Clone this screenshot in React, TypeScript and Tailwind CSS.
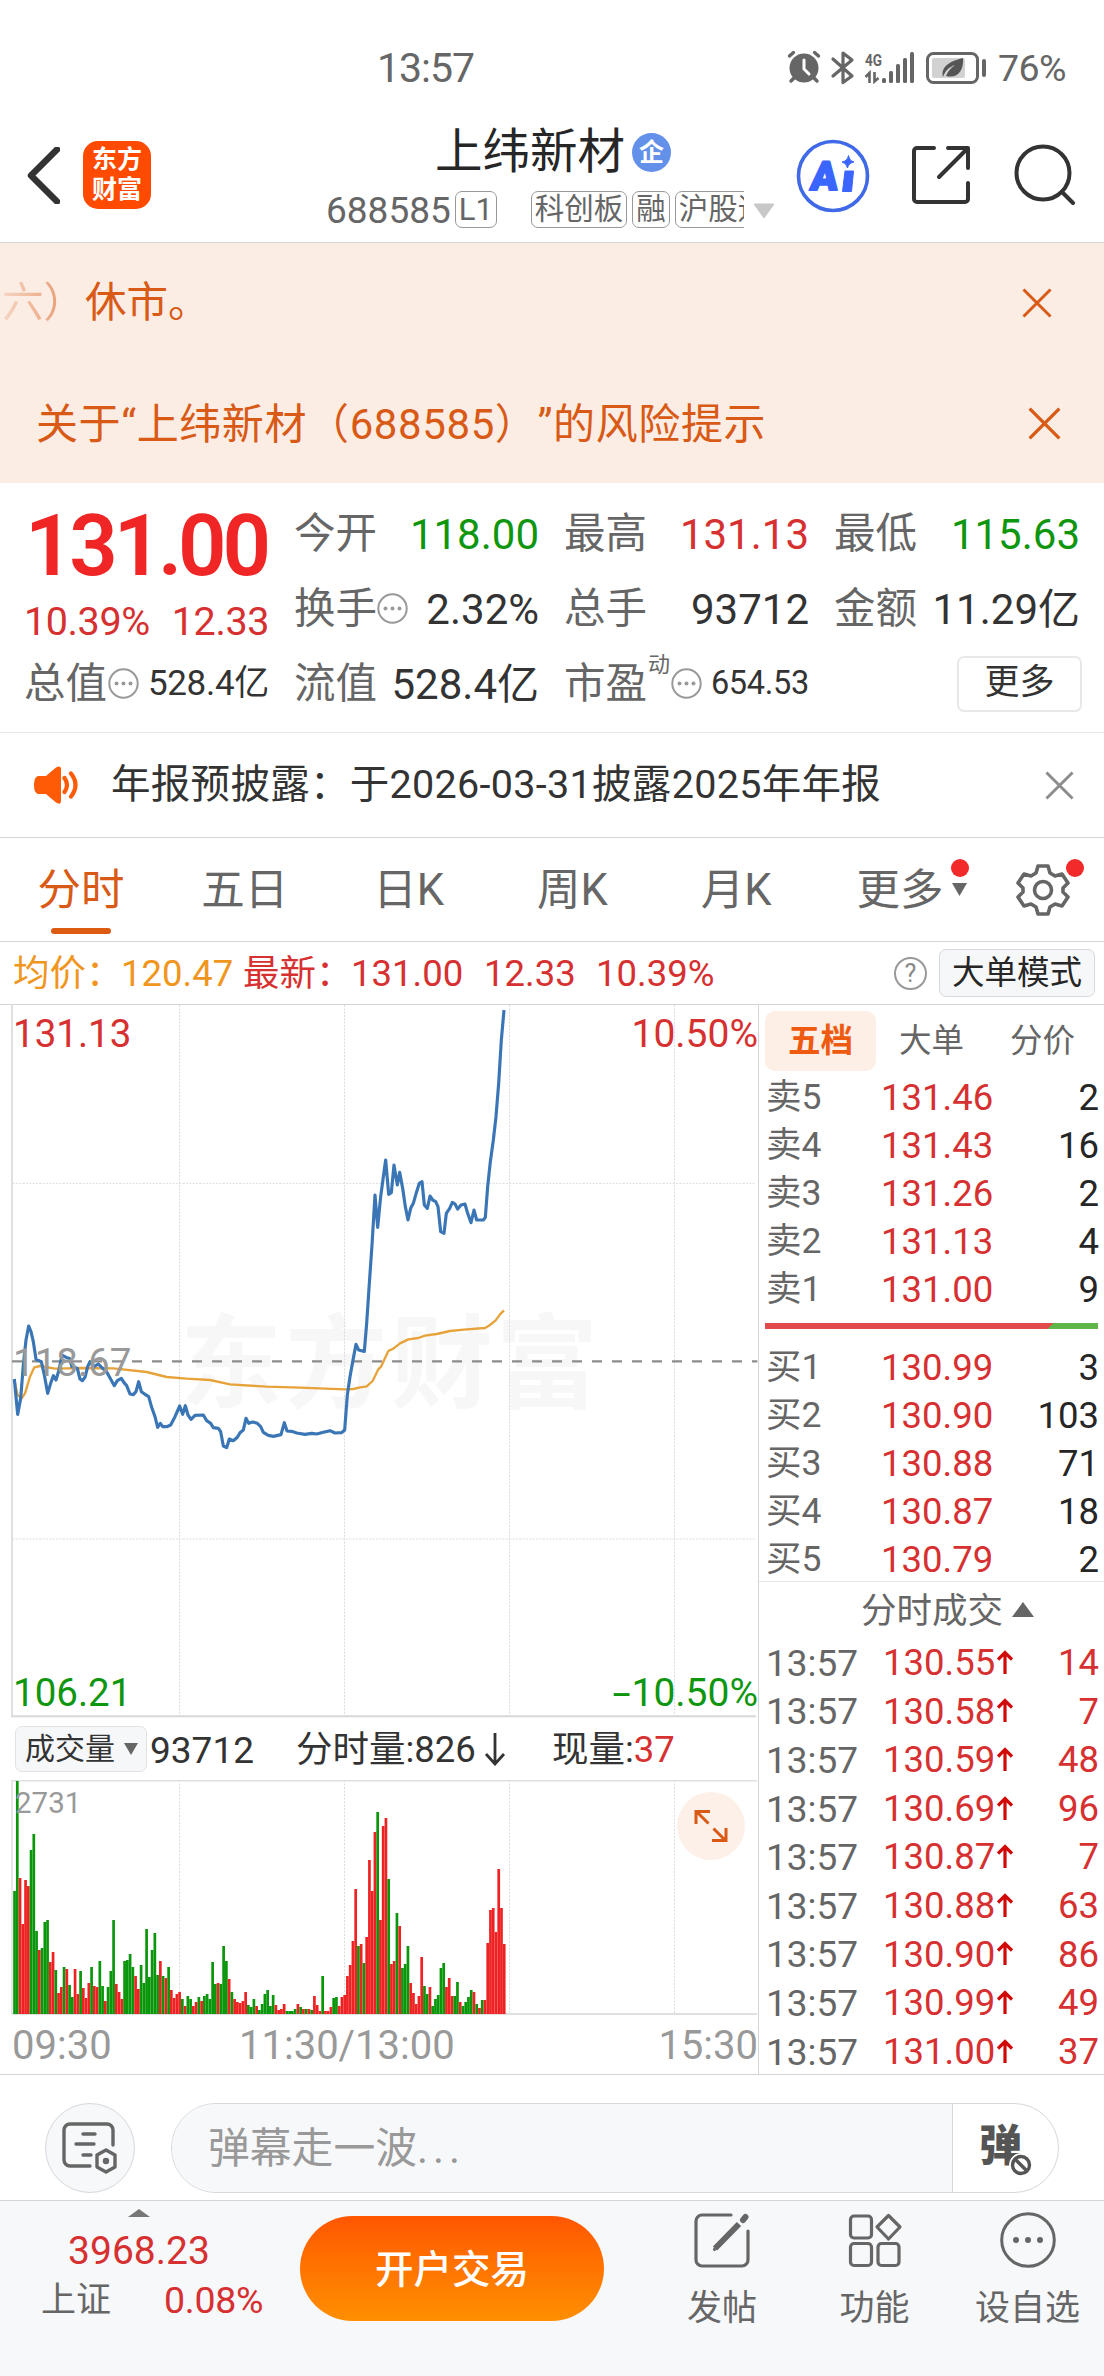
import React from 'react';

const sellOrders = [
    { label: '卖5', price: '131.46', qty: 2 },
    { label: '卖4', price: '131.43', qty: 16 },
    { label: '卖3', price: '131.26', qty: 2 },
    { label: '卖2', price: '131.13', qty: 4 },
    { label: '卖1', price: '131.00', qty: 9 },
];

const buyOrders = [
    { label: '买1', price: '130.99', qty: 3 },
    { label: '买2', price: '130.90', qty: 103 },
    { label: '买3', price: '130.88', qty: 71 },
    { label: '买4', price: '130.87', qty: 18 },
    { label: '买5', price: '130.79', qty: 2 },
];

const trades = [
    { price: '130.55', qty: 14 },
    { price: '130.58', qty: 7 },
    { price: '130.59', qty: 48 },
    { price: '130.69', qty: 96 },
    { price: '130.87', qty: 7 },
    { price: '130.88', qty: 63 },
    { price: '130.90', qty: 86 },
    { price: '130.99', qty: 49 },
    { price: '131.00', qty: 37 },
];

// chart units are thirds of a pixel
const pricePoints =
    '43,1137 53,1243 62,1195 70,1095 78,1020 86,978 93,995 100,1025 108,1078 124,1085 132,1120 143,1180 152,1150 160,1127 168,1140 177,1110 186,1065 200,1073 208,1075 216,1100 232,1105 240,1137 247,1142 255,1132 263,1100 270,1085 282,1100 295,1092 308,1105 318,1112 328,1130 343,1157 352,1142 364,1135 372,1148 380,1157 390,1182 400,1184 408,1175 416,1145 424,1175 435,1183 446,1190 455,1222 465,1250 473,1282 481,1270 488,1280 500,1280 512,1275 525,1250 539,1218 548,1243 556,1217 564,1245 573,1258 585,1246 610,1245 620,1262 632,1270 640,1283 655,1285 662,1295 670,1338 680,1343 688,1317 700,1322 712,1312 720,1298 730,1290 738,1255 746,1270 758,1266 772,1270 782,1280 790,1297 805,1306 820,1309 843,1304 853,1268 861,1293 875,1294 890,1299 915,1303 935,1300 950,1302 970,1297 990,1292 1005,1299 1025,1298 1034,1290 1042,1185 1050,1130 1060,1075 1068,1033 1076,1050 1084,1052 1093,1054 1100,970 1108,850 1116,735 1125,585 1133,682 1142,590 1150,530 1157,480 1166,583 1174,578 1182,495 1192,555 1199,517 1208,565 1216,620 1224,660 1232,625 1240,610 1250,575 1258,550 1266,545 1273,615 1282,625 1290,588 1298,600 1307,605 1314,620 1322,695 1332,700 1339,640 1349,625 1357,607 1365,612 1373,627 1383,615 1395,612 1403,640 1413,668 1422,630 1430,660 1450,660 1456,652 1463,560 1471,485 1480,420 1488,350 1496,250 1504,120 1512,30';

const avgPoints =
    '43,1140 53,1185 65,1195 75,1180 90,1130 103,1102 120,1098 165,1106 200,1105 250,1104 340,1105 440,1116 500,1131 560,1136 630,1140 690,1153 800,1160 900,1163 1035,1168 1060,1167 1080,1162 1100,1159 1118,1143 1135,1108 1143,1100 1165,1053 1180,1046 1200,1030 1225,1018 1255,1014 1275,1007 1310,1002 1350,993 1400,988 1455,984 1470,975 1487,961 1500,943 1512,931';

// one entry per minute: g = down, r = up, then bar height
const volumes =
    'g123 g233 r136 r90 r134 r128 g164 g180 g83 r64 g66 g92 g94 r52 r62 g44 r21 r27 g47 r45 g29 g17 r45 r20 g43 r26 r16 r31 g47 r28 r27 g53 g28 r13 g27 g43 g94 r30 r22 r15 g53 g54 g60 g47 r38 r25 g49 g31 g85 g37 g64 g81 g39 r53 g38 r36 g47 r24 r16 r20 r22 g15 r8 g18 g15 r8 r12 g17 r13 g18 g20 g15 g52 g30 r31 g30 g68 g53 r35 g22 r15 r12 r11 r13 r22 g9 g7 g15 r8 g4 g10 g20 g24 g8 g19 r9 r4 r5 r10 g3 g3 g3 g5 r10 g7 r5 g5 r5 g4 r18 r9 r3 g38 r3 r3 r7 g16 g17 r8 r17 r19 r38 r49 r73 r125 g68 r70 g51 r77 r154 r123 r182 g202 r94 r188 r196 g135 r50 r53 g101 r88 g46 g50 g68 r31 r21 r10 r18 r57 g28 g20 r27 g8 g15 g19 g46 g51 r27 r36 r18 g18 g32 r12 g8 g12 g17 g24 r22 g10 r6 g14 r14 r71 r104 r106 r82 r145 r106 r70'.split(' ');

const gridX = [179.5, 344.5, 509.5, 674.5];

const Close = ({ size, color, width = 3 }: { size: number; color: string; width?: number }) => (
    <svg width={size} height={size} viewBox="0 0 30 30" fill="none" stroke={color} strokeWidth={width}>
        <path d="M1.5 1.5 28.5 28.5M28.5 1.5 1.5 28.5" />
    </svg>
);

const Dots = () => (
    <svg className="shrink-0" width="31" height="31" viewBox="0 0 31 31">
        <circle cx="15.5" cy="15.5" r="14.2" fill="none" stroke="#999" strokeWidth="2" />
        <circle cx="8.5" cy="15.5" r="2" fill="#999" />
        <circle cx="15.5" cy="15.5" r="2" fill="#999" />
        <circle cx="22.5" cy="15.5" r="2" fill="#999" />
    </svg>
);

const StatusBar = () => (
    <div className="flex h-[86px] items-end text-[#666]">
        <div className="ml-[377px] h-[37px] text-[41px] leading-[38px] tracking-[-1px]">13:57</div>
        <svg className="mb-[-2px] ml-auto" width="202" height="44" viewBox="0 0 202 44">
            {/* alarm */}
            <g stroke="#666" fill="none" strokeLinecap="round" strokeWidth="3.4">
                <circle cx="17" cy="24" r="14.5" fill="#666" stroke="none" />
                <path d="M2.5 12 6.5 8.5M31.5 12 27.5 8.5" />
                <path d="M7 34 4 37M27 34 30 37" />
                <path d="M17 16v9l5 5" stroke="#fff" strokeWidth="3" />
            </g>
            {/* bluetooth */}
            <path d="M46 15 65 32 56 38.5V9l9 7L46 32" fill="none" stroke="#666" strokeWidth="3.2" strokeLinejoin="round" strokeLinecap="round" />
            <text x="78" y="21.5" fontSize="17" fontWeight="700" fill="#666" textLength="17" lengthAdjust="spacingAndGlyphs">4G</text>
            <path d="M78.5 33 82.5 29v10M91.5 34 87.5 37.5V28" fill="none" stroke="#666" strokeWidth="2.6" />
            <g fill="#666">
                <rect x="95" y="34" width="4" height="5" rx="1.5" />
                <rect x="102" y="27" width="4" height="12" rx="1.5" />
                <rect x="109" y="20" width="4" height="19" rx="1.5" />
                <rect x="116" y="14" width="4" height="25" rx="1.5" />
                <rect x="123" y="8" width="4" height="31" rx="1.5" />
            </g>
            {/* battery */}
            <rect x="140.5" y="9.5" width="50" height="29" rx="6" fill="none" stroke="#666" strokeWidth="3" />
            <rect x="145" y="14" width="33" height="20" rx="2" fill="#d2d2d2" />
            <path d="M156 33c-2-8 3-15 20-19 1 12-5 21-17 18 2-5 5-8 9-11-6 2-10 6-12 12z" fill="#555" />
            <rect x="195" y="15" width="4" height="18" rx="2" fill="#666" />
        </svg>
        <div className="mr-[38px] ml-[9px] h-[37px] text-[37.5px] leading-[38px] tracking-[-0.5px]">76%</div>
    </div>
);

const Tag = ({ children }: { children: React.ReactNode }) => (
    <span className="flex h-[37px] shrink-0 items-center rounded-[7px] border-[1.5px] border-[#999] px-[3px] text-[29.5px] leading-none whitespace-nowrap">
        {children}
    </span>
);

const Header = () => (
    <div className="flex h-[157px] border-b border-[#d5d5d5] text-[#2b2b2b]">
        <svg className="mt-[61px] ml-[26px] shrink-0" width="34" height="57" viewBox="0 0 34 57" fill="none" stroke="#333" strokeWidth="6.5">
            <path d="M31 2.5 5 28.5 31 54.5" strokeLinecap="round" strokeLinejoin="round" />
        </svg>
        <div className="mt-[55px] ml-[23px] flex h-[68px] w-[68px] shrink-0 flex-col items-center justify-center rounded-[15px] bg-[#ff4a00] text-[25px] leading-[30px] font-bold text-white">
            <span>东方</span>
            <span>财富</span>
        </div>
        <div className="ml-[173px] w-[452px] shrink-0 pt-[41px]">
            <div className="flex h-[52px] items-center pl-[111px]">
                <span className="text-[47.5px] leading-none text-[#262626]">上纬新材</span>
                <span className="-mt-[2px] ml-[7px] flex h-[39px] w-[39px] items-center justify-center rounded-full bg-[#6391ea] text-[25px] leading-none font-bold text-white">
                    企
                </span>
            </div>
            <div className="mt-[12px] flex h-[37px] items-center pl-[2px] text-[#666]">
                <span className="pt-px text-[37px] leading-none">688585</span>
                <span className="ml-[4px] flex h-[37px] w-[42px] items-center justify-center rounded-[7px] border-[1.5px] border-[#999] text-[31px] leading-none">
                    L1
                </span>
                <div className="ml-[34px] flex w-[213px] gap-[5px] overflow-hidden">
                    <Tag>科创板</Tag>
                    <Tag>融</Tag>
                    <Tag>沪股通</Tag>
                </div>
                <svg className="mt-[2px] ml-[9px] shrink-0" width="22" height="16" viewBox="0 0 22 16">
                    <path d="M1 1h20L11 15z" fill="#c8c8c8" stroke="#c8c8c8" strokeLinejoin="round" />
                </svg>
            </div>
        </div>
        <svg className="mt-[53px] ml-[20px] shrink-0" width="74" height="74" viewBox="0 0 74 74">
            <circle cx="37" cy="37" r="34.5" fill="none" stroke="#4069e8" strokeWidth="3.6" />
            <text transform="translate(13.5 50.5) skewX(-6)" fontSize="40" fontWeight="900" fill="#3a66ff" stroke="#3a66ff" strokeWidth="2" strokeLinejoin="round">A</text>
            <path d="M49 32h8.5l-2 20.5h-9z" fill="#3a66ff" stroke="#3a66ff" strokeLinejoin="round" />
            <path d="M52.5 16.5q1 5.5 5.5 6.5-5.5 1-6.5 6-1-5-5.5-6 5.5-1 6.5-6.5z" fill="#3a66ff" stroke="#3a66ff" />
        </svg>
        <svg className="mt-[59px] ml-[41px] shrink-0" width="60" height="60" viewBox="0 0 60 60" fill="none" stroke="#333" strokeWidth="4" strokeLinecap="round" strokeLinejoin="round">
            <path d="M23 3H6a3 3 0 0 0-3 3v48a3 3 0 0 0 3 3h48a3 3 0 0 0 3-3V38M37 3h20v20M56 4 28 32" />
        </svg>
        <svg className="mt-[57px] ml-[43px] shrink-0" width="62" height="62" viewBox="0 0 62 62" fill="none" stroke="#333" strokeWidth="4" strokeLinecap="round">
            <circle cx="29" cy="30" r="26.5" />
            <path d="M48 49 59 60" />
        </svg>
    </div>
);

const Banners = () => (
    <div className="h-[240px] bg-[#fcede4] text-[#d85a16] [text-spacing-trim:space-all]">
        <div className="flex h-[120px] items-center justify-between pr-[52px] pl-[2px]">
            <div className="text-[41.5px] leading-none">
                <span className="bg-linear-to-r from-[#d85a16]/15 to-[#d85a16]/70 bg-clip-text text-transparent">六）</span>
                <span>休市。</span>
            </div>
            <Close size={30} color="#d85a16" />
        </div>
        <div className="flex h-[120px] items-center justify-between pr-[43px] pl-[36px]">
            <div className="pt-[3px] text-[42px] leading-none tracking-[0.6px]">关于“上纬新材（688585）”的风险提示</div>
            <Close size={33} color="#d85a16" />
        </div>
    </div>
);

interface CellProps {
    label: string;
    value: string;
    tone?: string;
    dots?: boolean;
}

const Cell = ({ label, value, tone = 'text-[#333]', dots }: CellProps) => (
    <div className="flex h-[75px] items-center justify-between leading-none whitespace-nowrap">
        <span className="flex items-center text-[41.5px] text-[#666]">
            {label}
            {dots && <Dots />}
        </span>
        <span className={`pt-[2px] text-[42px] ${tone}`}>{value}</span>
    </div>
);

const Quote = () => (
    <div className="h-[250px] border-b border-[#e8e8e8] pt-[13px] pr-[24px] pl-[24px]">
        <div className="grid grid-cols-[245px_245px_245px_246px] gap-x-[25px]">
            <div className="row-span-2 h-[150px] leading-none">
                <div className="flex h-[98px] items-center pt-[3px] pl-px text-[85px] font-semibold tracking-[-4.2px] text-[#f02525]">131.00</div>
                <div className="flex h-[52px] items-center justify-between pt-[3px] text-[39.5px] tracking-[-0.4px] text-[#d63031]">
                    <span>10.39%</span>
                    <span>12.33</span>
                </div>
            </div>
            <Cell label="今开" value="118.00" tone="text-[#0f960f]" />
            <Cell label="最高" value="131.13" tone="text-[#d63031]" />
            <Cell label="最低" value="115.63" tone="text-[#0f960f]" />
            <Cell label="换手" value="2.32%" dots />
            <Cell label="总手" value="93712" />
            <Cell label="金额" value="11.29亿" />
            <div className="flex h-[75px] items-center leading-none whitespace-nowrap">
                <span className="mr-px text-[41.5px] text-[#666]">总值</span>
                <Dots />
                <span className="ml-auto text-[35px] tracking-[-0.3px] text-[#333]">528.4亿</span>
            </div>
            <Cell label="流值" value="528.4亿" />
            <div className="flex h-[75px] items-center leading-none">
                <span className="text-[41.5px] text-[#666]">市盈</span>
                <span className="-mt-[38px] ml-[1px] text-[22px] text-[#666]">动</span>
                <span className="ml-[1px]">
                    <Dots />
                </span>
                <span className="ml-auto text-[32.5px] tracking-[-0.3px] text-[#333]">654.53</span>
            </div>
            <div className="flex h-[75px] items-center justify-end">
                <div className="-mr-[2px] flex h-[56px] w-[125px] items-center justify-center rounded-[7px] border-2 border-[#e8e8e8] pb-[2px] text-[35px] leading-none text-[#333]">
                    更多
                </div>
            </div>
        </div>
    </div>
);

const Notice = () => (
    <div className="flex h-[105px] items-center border-b border-[#d5d5d5] pr-[30px] pl-[34px]">
        <svg width="46" height="38" viewBox="0 0 46 38">
            <path d="M4 10h8L22 1.5q5-3 5 2v31q0 5-5 2L12 28H4q-4-1-4-9t4-9z" fill="#ff5a05" />
            <path d="M30.5 12q5 7 0 14M37 7.5q9 11.5 0 23" fill="none" stroke="#ff5a05" strokeWidth="4.2" strokeLinecap="round" />
        </svg>
        <span className="ml-[31px] text-[39.5px] leading-none tracking-[0.3px] text-[#333]">年报预披露：于2026-03-31披露2025年年报</span>
        <span className="ml-auto">
            <Close size={29} color="#8c8c8c" />
        </span>
    </div>
);

const Tabs = () => (
    <div className="flex h-[104px] border-b border-[#d5d5d5] text-[43.5px] leading-none text-[#666]">
        <div className="-ml-px grid w-[983px] shrink-0 grid-cols-6">
            {['分时', '五日', '日K', '周K', '月K', '更多'].map((t, i) => (
                <div key={t} className={`relative flex h-[104px] items-center justify-center pt-[2px] ${i === 0 ? 'text-[#d85a16]' : ''}`}>
                    {t}
                    {i === 0 && <span className="absolute bottom-[8px] h-[6px] w-[60px] rounded-full bg-[#dd5a12]" />}
                    {i === 5 && (
                        <>
                            <span className="absolute top-[21px] right-[13px] h-[18px] w-[18px] rounded-full bg-[#f22a2a]" />
                            <svg className="absolute top-[45px] right-[15px]" width="15" height="13" viewBox="0 0 15 13">
                                <path d="M0 0h15L7.5 13z" fill="#666" />
                            </svg>
                        </>
                    )}
                </div>
            ))}
        </div>
        <div className="relative ml-[34px] flex items-center">
            <svg width="54" height="54" viewBox="0 0 54 54" fill="none" stroke="#666" strokeWidth="3.6" strokeLinejoin="round">
                <path d="M22 3h10l2 7 5 3 7-2 6 9-5 5v4l5 5-6 9-7-2-5 3-2 7H22l-2-7-5-3-7 2-6-9 5-5v-4l-5-5 6-9 7 2 5-3z" />
                <circle cx="27" cy="27" r="8.5" />
            </svg>
            <span className="absolute top-[21px] -right-[14px] h-[18px] w-[18px] rounded-full bg-[#f22a2a]" />
        </div>
    </div>
);

const PriceLine = () => (
    <div className="flex h-[63px] items-center border-b border-[#d5d5d5] pr-[9px] pl-[13px] text-[36.5px] leading-none whitespace-nowrap text-[#d63031]">
        <span className="w-[108px] pt-[2px] text-[#f0961e]">均价：</span>
        <span className="w-[122px] pt-[2px] text-[#f0961e]">120.47</span>
        <span className="w-[108px] pt-[2px]">最新：</span>
        <span className="w-[133px] pt-[2px]">131.00</span>
        <span className="w-[112px] pt-[2px]">12.33</span>
        <span className="pt-[2px]">10.39%</span>
        <span className="ml-auto flex h-[33px] w-[33px] items-center justify-center rounded-full border-[2.5px] border-[#999] text-[25px] text-[#888]">?</span>
        <span className="ml-[12px] flex h-[48px] w-[156px] items-center justify-center rounded-[7px] border-[1.5px] border-[#d6d9dd] bg-[#f6f7f9] pt-px text-[32.5px] text-[#262626]">
            大单模式
        </span>
    </div>
);

const PriceChart = () => (
    <div className="relative h-[713px] text-[38.5px] leading-none">
        <svg className="block" width="758" height="713" viewBox="0 15 2274 2139">
            <text x="540" y="1201" fontSize="306" fontWeight="700" letterSpacing="10" fill="#f7f7f7">东方财富</text>
            <g stroke="#dcdcdc" strokeWidth="3" strokeDasharray="6 4">
                {gridX.map((x) => (
                    <line key={x} x1={x * 3} x2={x * 3} y1="15" y2="2148" />
                ))}
                <line x1="38" x2="2268" y1="550" y2="550" />
                <line x1="38" x2="2268" y1="1617" y2="1617" />
            </g>
            <line x1="36" x2="36" y1="15" y2="2148" stroke="#e0e0e0" strokeWidth="6" />
            <line x1="33" x2="2268" y1="2149" y2="2149" stroke="#d8d8d8" strokeWidth="6" />
            <line x1="36" x2="2272" y1="1084" y2="1084" stroke="#8c8c8c" strokeWidth="7" strokeDasharray="30 30" />
            <polyline points={avgPoints} fill="none" stroke="#e8a23a" strokeWidth="7" strokeLinejoin="round" />
            <polyline points={pricePoints} fill="none" stroke="#3a76b6" strokeWidth="9.5" strokeLinejoin="round" />
        </svg>
        <span className="absolute top-[10px] left-[13px] text-[#d63031]">131.13</span>
        <span className="absolute top-[10px] right-0 text-[39px] text-[#d63031]">10.50%</span>
        <span className="absolute top-[339px] left-[13px] text-[#999]">118.67</span>
        <span className="absolute bottom-[6px] left-[13px] text-[#0f960f]">106.21</span>
        <span className="absolute right-0 bottom-[5px] text-[39px] text-[#0f960f]">
            <span className="mr-px inline-block origin-right scale-x-[1.7]">-</span>10.50%
        </span>
    </div>
);

const VolumeChart = () => (
    <div>
        <div className="flex h-[62px] items-center pl-[15px] text-[36.5px] leading-none whitespace-nowrap text-[#333]">
            <span className="flex h-[46px] w-[132px] items-center rounded-[7px] border-[1.5px] border-[#e0e2e5] bg-[#f6f7f9] pl-[9px] text-[30px]">
                成交量
                <svg className="ml-[9px]" width="14" height="12" viewBox="0 0 14 12">
                    <path d="M0 0h14L7 12z" fill="#666" />
                </svg>
            </span>
            <span className="ml-[3px] w-[146px] pt-[2px] text-[37px]">93712</span>
            <span className="pt-[2px]">分时量:826</span>
            <svg className="ml-[8px]" width="22" height="34" viewBox="0 0 22 34" fill="none" stroke="#333" strokeWidth="2.8">
                <path d="M11 1v30M2 22l9 10 9-10" />
            </svg>
            <span className="ml-[46px] pt-[2px]">
                现量:<span className="text-[#d63031]">37</span>
            </span>
        </div>
        <div className="relative h-[235px]">
            <svg className="block" width="758" height="235" viewBox="0 0 758 235">
                <line x1="12" x2="757" y1=".75" y2=".75" stroke="#e0e0e0" strokeWidth="1.5" />
                <line x1="12" x2="12" y1="0" y2="234" stroke="#e0e0e0" strokeWidth="1.5" />
                {gridX.map((x) => (
                    <line key={x} x1={x} x2={x} y1="0" y2="234" stroke="#dcdcdc" strokeDasharray="2 1.5" />
                ))}
                <line x1="12" x2="757" y1="234" y2="234" stroke="#e0e0e0" strokeWidth="2" />
                {volumes.map((v, i) => {
                    const h = Number(v.slice(1));
                    return <rect key={i} x={13.2 + i * 2.751} y={234 - h} width="2.7" height={h} fill={v[0] === 'g' ? '#0a960a' : '#ee2222'} />;
                })}
            </svg>
            <span className="absolute top-[9px] left-[15px] text-[29.5px] leading-none text-[#999]">2731</span>
            <div className="absolute top-[12px] left-[677px] flex h-[68px] w-[68px] items-center justify-center rounded-full bg-[#fdf0e9]">
                <svg width="34" height="34" viewBox="0 0 34 34" fill="none" stroke="#d85a16" strokeWidth="3">
                    <path d="M2 15V2.5h14M2.5 2.5 14.5 14.5M32 19v12.5H18M31.5 31.5l-12-12" />
                </svg>
            </div>
        </div>
        <div className="flex h-[59px] items-center pt-[2px] pl-[12px] text-[40px] leading-none text-[#999]">
            <span className="w-[227px]">09:30</span>
            <span>11:30/13:00</span>
            <span className="ml-auto">15:30</span>
        </div>
    </div>
);

const OrderRow = ({ label, price, qty }: { label: string; price: string; qty: number }) => (
    <div className="grid h-[48px] grid-cols-[115px_115px_1fr] items-center">
        <span className="text-[35.5px] text-[#666]">{label}</span>
        <span className="text-[#d63031]">{price}</span>
        <span className="text-right text-[#262626]">{qty}</span>
    </div>
);

const OrderBook = () => (
    <div className="h-[1069px] w-[346px] border-l-[1.5px] border-[#d5d5d5] text-[36.5px] leading-none">
        <div className="mt-[6px] ml-[6px] grid h-[60px] grid-cols-[111px_111px_111px] text-[32.5px] text-[#666]">
            <span className="flex items-center justify-center rounded-[10px] bg-[#fdeee6] pt-px font-bold text-[#ee5a10]">五档</span>
            <span className="flex items-center justify-center pt-px">大单</span>
            <span className="flex items-center justify-center pt-px">分价</span>
        </div>
        <div className="mt-[3px] pr-[5px] pl-[7px]">
            {sellOrders.map((o) => (
                <OrderRow key={o.label} {...o} />
            ))}
        </div>
        <div className="mt-[9px] ml-[6px] h-[6px] w-[333px] bg-[linear-gradient(135deg,#e04a4a_0_204px,#5fb648_204px)]" />
        <div className="mt-[15px] h-[238px] border-b border-[#e8e8e8] pr-[5px] pl-[7px]">
            {buyOrders.map((o) => (
                <OrderRow key={o.label} {...o} />
            ))}
        </div>
        <div className="flex h-[57px] items-center pt-[2px] pl-[102px] text-[35.5px] text-[#666]">
            分时成交
            <svg className="mb-[4px] ml-[9px]" width="22" height="15" viewBox="0 0 22 15">
                <path d="M11 0 22 15H0z" fill="#666" />
            </svg>
        </div>
        <div className="pr-[5px] pl-[7px]">
            {trades.map((t) => (
                <div key={t.price} className="flex h-[48.6px] items-center text-[#d63031]">
                    <span className="w-[117px] text-[37px] text-[#666]">13:57</span>
                    <span className="w-[114px]">{t.price}</span>
                    <svg className="mb-[3px]" width="16" height="24" viewBox="0 0 16 24" fill="none" stroke="#d00808" strokeWidth="3.2">
                        <path d="M8 24V2.5M1 9.5l7-7 7 7" />
                    </svg>
                    <span className="ml-auto">{t.qty}</span>
                </div>
            ))}
        </div>
    </div>
);

const CommentBar = () => (
    <div className="flex h-[126px] items-end border-t border-[#d5d5d5] px-[45px] pb-[7px]">
        <div className="flex h-[90px] w-[90px] items-center justify-center rounded-full border-[1.5px] border-[#d5d7db] bg-[#f7f8fa]">
            <svg width="56" height="54" viewBox="0 0 56 54" fill="none" stroke="#666" strokeWidth="3.4" strokeLinecap="round">
                <path d="M51 24V9a6 6 0 0 0-6-6H8a6 6 0 0 0-6 6v30a6 6 0 0 0 6 6h20M21 13h12M14 23h18M21 34h8" />
                <path d="m44 29 9 5v12l-9 5-9-5V34z" strokeLinejoin="round" />
                <circle cx="44" cy="40" r="1.5" />
            </svg>
        </div>
        <div className="ml-[36px] flex h-[90px] w-[888px] overflow-hidden rounded-full border-[1.5px] border-[#d5d7db]">
            <div className="flex w-[781px] items-center border-r-[1.5px] border-[#d5d7db] bg-[#f7f8fa] pt-[2px] pl-[36px] text-[41.8px] leading-none text-[#999]">
                弹幕走一波<span className="tracking-[5px]">...</span>
            </div>
            <div className="relative flex-1">
                <span className="absolute top-[21px] left-[26px] text-[43px] leading-none font-black text-[#555]">弹</span>
                <svg className="absolute top-[49px] left-[56px]" width="24" height="24" viewBox="0 0 24 24" stroke="#555" strokeWidth="3.4">
                    <circle cx="12" cy="12" r="11.5" fill="#fff" stroke="#fff" strokeWidth="1" />
                    <circle cx="12" cy="12" r="8.5" fill="#fff" />
                    <path d="M6 6l12 12" />
                </svg>
            </div>
        </div>
    </div>
);

const BottomNav = () => (
    <div className="flex h-[176px] border-t border-[#d5d5d5] bg-[#f7f8fa] leading-none text-[#666]">
        <div className="flex w-[278px] flex-col items-center pt-[8px]">
            <svg width="22" height="8" viewBox="0 0 22 8">
                <path d="M11 0 22 8H0z" fill="#777" />
            </svg>
            <span className="mt-[15px] text-[39px] text-[#d63031]">3968.23</span>
            <div className="mt-[11px] flex w-full items-center pl-[41px]">
                <span className="text-[35px]">上证</span>
                <span className="ml-[53px] text-[37.5px] tracking-[-0.3px] text-[#d63031]">0.08%</span>
            </div>
        </div>
        <div className="mt-[15px] ml-[22px] flex h-[105px] w-[304px] items-center justify-center rounded-full bg-linear-to-b from-[#ff5500] to-[#ff8f00] pt-[3px] text-[38.5px] font-medium text-white">
            开户交易
        </div>
        <div className="ml-[42px] grid grid-cols-[152px_153px_153px] pt-[11px] text-[35px]">
            <div className="flex flex-col items-center gap-[23px]">
                <svg width="56" height="56" viewBox="0 0 56 56" fill="none" stroke="#666" strokeWidth="3.2" strokeLinecap="round">
                    <path d="M37 3H8a6 6 0 0 0-6 6v39a6 6 0 0 0 6 6h40a6 6 0 0 0 6-6V19" />
                    <path d="M21 36.5 45 12" strokeWidth="6" strokeLinecap="butt" />
                    <path d="m49 8 2.5-3" strokeWidth="6" />
                    <path d="M20.5 37.5 24 32" />
                </svg>
                <span>发帖</span>
            </div>
            <div className="flex flex-col items-center gap-[23px]">
                <svg width="56" height="56" viewBox="0 0 56 56" fill="none" stroke="#666" strokeWidth="3.2" strokeLinejoin="round">
                    <rect x="3.5" y="4" width="21" height="22" rx="3.5" />
                    <rect x="3.5" y="31.5" width="21" height="22" rx="3.5" />
                    <rect x="31" y="31.5" width="21" height="22" rx="3.5" />
                    <path d="M41.5 3.5 53 15 41.5 27 30 15z" />
                </svg>
                <span>功能</span>
            </div>
            <div className="flex flex-col items-center gap-[23px]">
                <svg width="56" height="56" viewBox="0 0 56 56">
                    <circle cx="28" cy="28" r="26.3" fill="none" stroke="#666" strokeWidth="3" />
                    <circle cx="16" cy="28" r="3" fill="#666" />
                    <circle cx="28" cy="28" r="3" fill="#666" />
                    <circle cx="40" cy="28" r="3" fill="#666" />
                </svg>
                <span>设自选</span>
            </div>
        </div>
    </div>
);

export default function App() {
    return (
        <div className="w-[1104px] overflow-hidden bg-white [font-family:Roboto,'Noto_Sans_CJK_SC',sans-serif]">
            <StatusBar />
            <Header />
            <Banners />
            <Quote />
            <Notice />
            <Tabs />
            <PriceLine />
            <div className="flex">
                <div className="w-[758px]">
                    <PriceChart />
                    <VolumeChart />
                </div>
                <OrderBook />
            </div>
            <CommentBar />
            <BottomNav />
        </div>
    );
}
